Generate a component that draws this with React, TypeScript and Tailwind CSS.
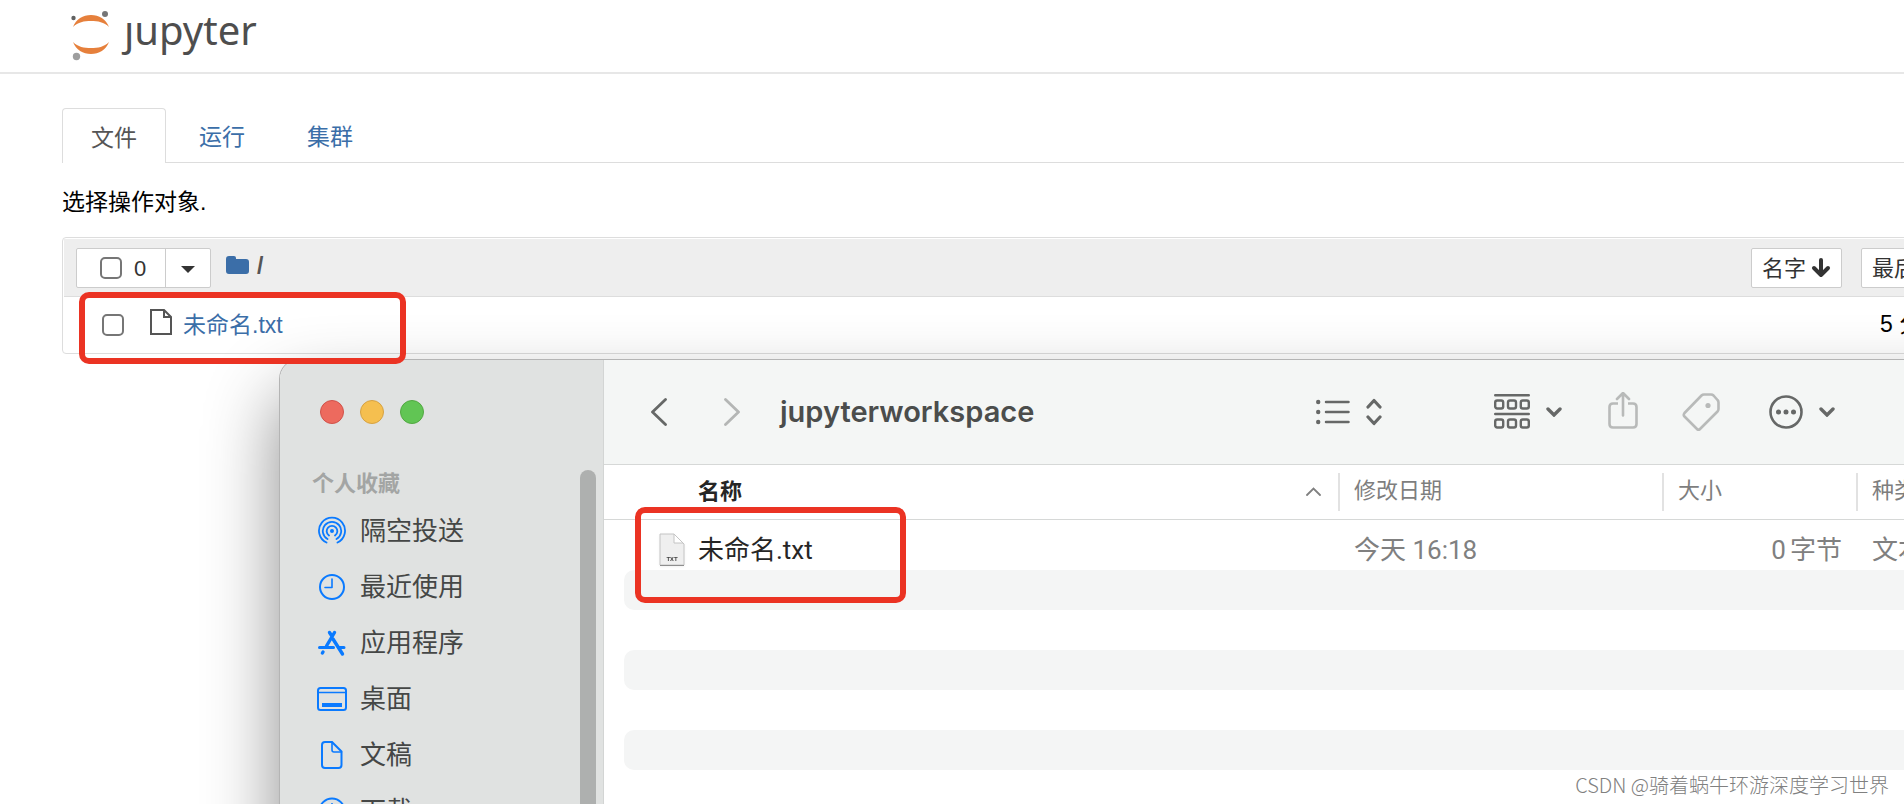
import type { ReactNode } from "react"

const tabs = ["文件", "运行", "集群"]

function JupyterLogo() {
  return (
    <a href="#home" aria-label="jupyter" className="flex items-start text-[#4e4e4e]">
      <svg width="40" height="52" viewBox="0 0 40 52" aria-hidden="true">
        <path d="M3 17C6 9 13 5 21 5s15 4 18 12C34 12 28 11 21 11S8 12 3 17Z" fill="#e6803c" />
        <path d="M3 32c3 8 10 12 18 12s15-4 18-12c-5 5-11 6-18 6S8 37 3 32Z" fill="#e6803c" />
        <circle cx="35" cy="4" r="3" fill="#767677" />
        <circle cx="3.500" cy="8" r="2.200" fill="#616262" />
        <circle cx="6.500" cy="46.500" r="3.700" fill="#9e9e9e" />
      </svg>
      <span className="ml-[14px] font-['Noto_Sans',sans-serif] text-[40px] leading-10">ȷupyter</span>
    </a>
  )
}

function Header() {
  return (
    <header className="flex h-[74px] items-start border-b-2 border-[#e7e7e7] pl-[70px] pt-[10px]">
      <JupyterLogo />
    </header>
  )
}

function FileBrowser() {
  return (
    <main className="-mr-24 pl-[62px] pt-[34px] text-[23px] text-black">
      <nav className="flex gap-1 border-b border-[#ddd]">
        {tabs.map((tab, i) => (
          <a
            key={tab}
            href={`#${i}`}
            className={
              i === 0
                ? "-mb-px flex h-[55px] items-center rounded-t border border-b-0 border-[#ddd] bg-white px-7 pt-1 text-[#555]"
                : "-mb-px flex h-[55px] items-center border border-transparent px-7 pt-1 text-[#3b6ea8]"
            }
          >
            {tab}
          </a>
        ))}
      </nav>

      <p className="mt-[23px] leading-8">选择操作对象.</p>

      <div className="mt-[19px] rounded-sm border border-[#ddd] p-px">
        <div className="flex h-[58px] items-center border-b border-[#ddd] bg-[#eee] pl-3 pt-px text-[22px] text-[#333]">
          <div className="flex h-10 rounded-xs border border-[#ccc] bg-white">
            <label className="flex w-[88px] items-center gap-3 pl-[23px]">
              <input
                type="checkbox"
                className="size-[22px] appearance-none rounded-[5px] border-2 border-[#767676] bg-white"
              />
              0
            </label>
            <button aria-label="选择" className="flex w-[45px] items-center justify-center border-l border-[#ccc]">
              <svg width="14" height="8" viewBox="0 0 14 8" className="mt-1">
                <path d="M0 0h14L7 7Z" fill="#333" />
              </svg>
            </button>
          </div>
          <a href="#root" aria-label="根目录" className="ml-[15px] pb-[6px]">
            <svg width="23" height="20" viewBox="0 0 23 20">
              <path
                d="M3 1h5q2 0 2 2v1h10q3 0 3 3v9q0 3-3 3H3q-3 0-3-3V4q0-3 3-3Z"
                fill="#3b6ea8"
              />
            </svg>
          </a>
          <span className="ml-2 pb-1 text-[23px] font-bold text-[#555]">/</span>
          <div className="ml-auto flex w-[247px] gap-[19px]">
            <button className="flex h-10 shrink-0 items-center gap-[5px] rounded-xs border border-[#ccc] bg-white px-[10px]">
              名字
              <svg width="20" height="20" viewBox="0 0 20 20" fill="none" stroke="#333" strokeWidth="4" strokeLinecap="round" strokeLinejoin="round">
                <path d="M10 2v15M3 10l7 7 7-7" />
              </svg>
            </button>
            <button className="h-10 shrink-0 rounded-xs border border-[#ccc] bg-white px-[10px]">最后修改</button>
          </div>
        </div>
        <div className="flex h-[55px] items-center pl-[38px]">
          <input
            type="checkbox"
            aria-label="未命名.txt"
            className="size-[22px] appearance-none rounded-[5px] border-2 border-[#767676] bg-white"
          />
          <svg width="22" height="26" viewBox="0 0 22 26" fill="none" stroke="#555" strokeWidth="2" className="mb-[6px] ml-[26px]">
            <path d="M1 1h13l7 7v17H1ZM14 1v7h7" />
          </svg>
          <a href="#file" className="ml-[11px] pt-px text-[#3b6ea8]">
            未命名.txt
          </a>
          <span className="ml-auto w-[118px]">5 分钟前</span>
        </div>
      </div>
    </main>
  )
}

function SideIcon({ children }: { children: ReactNode }) {
  return (
    <svg
      width="30"
      height="30"
      viewBox="0 0 30 30"
      fill="none"
      stroke="#0a7aff"
      strokeWidth="2"
      strokeLinecap="round"
      strokeLinejoin="round"
      className="shrink-0"
    >
      {children}
    </svg>
  )
}

const places = [
  {
    name: "隔空投送",
    icon: (
      <>
        <circle cx="15" cy="15" r="2" fill="#0a7aff" stroke="none" />
        <path d="M12 19.500a5.300 5.300 0 1 1 6 0M10.500 23a9.200 9.200 0 1 1 9 0M9.500 26.500a13 13 0 1 1 11 0" strokeWidth="1.800" />
      </>
    ),
  },
  {
    name: "最近使用",
    icon: (
      <>
        <circle cx="15" cy="15" r="12" />
        <path d="M15 7v8.500H8" strokeWidth="1.600" />
      </>
    ),
  },
  {
    name: "应用程序",
    icon: (
      <>
        <path d="M17.500 4.500L9.500 18M12.500 4.500l2 3M16 11l9.500 15M6 24l-.6 1" strokeWidth="3.400" />
        <path d="M2.500 19.500h14M22 19.500h5" strokeWidth="3" />
      </>
    ),
  },
  {
    name: "桌面",
    icon: (
      <>
        <rect x="1" y="4" width="28" height="22" rx="2.500" />
        <path d="M1 8.500h28" strokeWidth="1.600" />
        <path d="M5 19h20v4H5Z" fill="#0a7aff" stroke="none" />
      </>
    ),
  },
  {
    name: "文稿",
    icon: (
      <>
        <path d="M8 2h7l9.500 9.500V25q0 3-3 3H8q-3 0-3-3V5q0-3 3-3Z" />
        <path d="M15 2v8q0 2 2 2h7.500" strokeWidth="1.600" />
      </>
    ),
  },
  {
    name: "下载",
    icon: (
      <>
        <circle cx="15" cy="15" r="12.500" />
        <path d="M15 8v13M10 16l5 5 5-5" />
      </>
    ),
  },
]

function Sidebar() {
  return (
    <aside className="flex w-[324px] shrink-0 border-r border-[#d3d5d4] bg-[#e0e2e1]">
      <div className="flex-1 pt-10">
        <div className="flex gap-4 pl-10">
          <button aria-label="关闭" className="size-6 rounded-full border border-[#d0524a] bg-[#ed6a5e]" />
          <button aria-label="最小化" className="size-6 rounded-full border border-[#d6a243] bg-[#f5bf4f]" />
          <button aria-label="缩放" className="size-6 rounded-full border border-[#52a842] bg-[#61c554]" />
        </div>
        <h2 className="mt-11 pl-8 text-[22px] font-bold leading-8 text-[#a3a5a4]">个人收藏</h2>
        <ul className="mt-[3px]">
          {places.map((place) => (
            <li key={place.name}>
              <a href="#place" className="flex h-14 items-center gap-[13px] pl-[37px] text-[26px] text-[#454746]">
                <SideIcon>{place.icon}</SideIcon>
                {place.name}
              </a>
            </li>
          ))}
        </ul>
      </div>
      <div className="mr-[7px] mt-[110px] w-4 rounded-t-full bg-[#aeb0af]" />
    </aside>
  )
}

function DownChevron() {
  return (
    <svg width="16" height="10" viewBox="0 0 16 10" fill="none" stroke="#666867" strokeWidth="3.400" strokeLinecap="round" className="ml-4">
      <path d="M2 2l6 6 6-6" />
    </svg>
  )
}

function Toolbar() {
  return (
    <div className="flex h-[105px] items-center border-b border-[#d6d8d7] bg-[#f4f6f5] pl-[47px] pr-[165px]">
      <button aria-label="后退">
        <svg width="16" height="28" viewBox="0 0 16 28" fill="none" stroke="#666867" strokeWidth="2.800" strokeLinecap="round" strokeLinejoin="round">
          <path d="M14.500 1.500L1.500 14l13 12.500" />
        </svg>
      </button>
      <button aria-label="前进" className="ml-[57px]">
        <svg width="16" height="28" viewBox="0 0 16 28" fill="none" stroke="#b4b6b5" strokeWidth="2.800" strokeLinecap="round" strokeLinejoin="round">
          <path d="M1.500 1.500L14.500 14l-13 12.500" />
        </svg>
      </button>
      <h1 className="ml-10 font-[Inter,sans-serif] text-[29px] font-semibold leading-10 text-[#4b4d4c]">
        jupyterworkspace
      </h1>

      <button aria-label="列表显示" className="ml-auto flex items-center gap-4">
        <svg width="34" height="26" viewBox="0 0 34 26" fill="none" stroke="#666867" strokeWidth="2.500" strokeLinecap="round">
          <path d="M10 3h22.500M10 13h22.500M10 23h22.500" />
          <path d="M2.200 3h.01M2.200 13h.01M2.200 23h.01" strokeWidth="4.400" />
        </svg>
        <svg width="16" height="28" viewBox="0 0 16 28" fill="none" stroke="#666867" strokeWidth="3.200" strokeLinecap="round" strokeLinejoin="round">
          <path d="M2 9l6-6.500L14 9M2 19l6 6.500 6-6.500" />
        </svg>
      </button>
      <button aria-label="分组" className="ml-28 flex items-center">
        <svg width="36" height="36" viewBox="0 0 36 36" fill="none" stroke="#666867" strokeWidth="2.400" strokeLinecap="round">
          <path d="M1.200 1.200h33.600M1.200 20h33.600" />
          <rect x="1.200" y="6.500" width="8" height="8" rx="2" />
          <rect x="14" y="6.500" width="8" height="8" rx="2" />
          <rect x="26.800" y="6.500" width="8" height="8" rx="2" />
          <rect x="1.200" y="25.500" width="8" height="8" rx="2" />
          <rect x="14" y="25.500" width="8" height="8" rx="2" />
          <rect x="26.800" y="25.500" width="8" height="8" rx="2" />
        </svg>
        <DownChevron />
      </button>
      <button aria-label="共享" className="ml-[46px]">
        <svg width="30" height="40" viewBox="0 0 30 40" fill="none" stroke="#b8bab9" strokeWidth="2.600" strokeLinecap="round" strokeLinejoin="round">
          <path d="M10 11.500H5q-3.500 0-3.500 3.500v17q0 3.500 3.500 3.500h20q3.500 0 3.500-3.500V15q0-3.500-3.500-3.500h-5" strokeLinecap="butt" />
          <path d="M15 23.500V1.500M9 7l6-6 6 6" />
        </svg>
      </button>
      <button aria-label="标签" className="ml-11">
        <svg width="38" height="38" viewBox="0 0 38 38" fill="none" stroke="#b8bab9" strokeWidth="2.600" strokeLinejoin="round">
          <path d="M19.500 2.500Q20.500 1.500 22 1.500H29Q30.500 1.500 31.500 2.500L35.500 7Q36.500 8 36.500 9.500V16Q36.500 17.500 35.500 18.500L18 36Q16.500 37.500 15 36L2.500 23.500Q1 22 2.500 20Z" />
          <circle cx="26" cy="12.500" r="2.600" fill="#b8bab9" stroke="none" />
        </svg>
      </button>
      <button aria-label="更多" className="ml-[49px] flex items-center">
        <svg width="34" height="34" viewBox="0 0 34 34" fill="none" stroke="#666867" strokeWidth="2.600">
          <circle cx="17" cy="17" r="15.500" />
          <path d="M9.500 17h.01M17 17h.01M24.500 17h.01" strokeWidth="5" strokeLinecap="round" />
        </svg>
        <DownChevron />
      </button>
    </div>
  )
}

function TxtIcon() {
  return (
    <svg width="26" height="34" viewBox="0 0 26 34" className="shrink-0 drop-shadow-xs">
      <path d="M1 1h14l10 10v21H1Z" fill="#efefef" stroke="#c4c4c4" />
      <path d="M1 32.500h24" stroke="#8e8e8e" />
      <path d="M15 1v9h9Z" fill="#fff" stroke="#c4c4c4" />
      <text x="13" y="28" fontSize="6" fontWeight="bold" textAnchor="middle" fill="#444">
        TXT
      </text>
    </svg>
  )
}

function FileTable() {
  return (
    <>
      <table className="w-full table-fixed text-left">
        <colgroup>
          <col />
          <col className="w-[324px]" />
          <col className="w-[194px]" />
          <col className="w-36" />
        </colgroup>
        <thead className="border-b border-[#d6d8d7] text-[22px] text-[#7e7e7e]">
          <tr className="h-[54px]">
            <th className="pl-[94px] pr-[17px] font-bold text-[#262626]">
              <div className="flex items-center justify-between">
                名称
                <svg width="15" height="9" viewBox="0 0 15 9" fill="none" stroke="#808080" strokeWidth="1.800" strokeLinecap="round">
                  <path d="M1 8l6.500-6.500L14 8" />
                </svg>
              </div>
            </th>
            {["修改日期", "大小", "种类"].map((label) => (
              <th key={label} className="font-normal">
                <div className="h-[38px] border-l-2 border-[#e2e2e2] pl-[14px] leading-9">{label}</div>
              </th>
            ))}
          </tr>
        </thead>
        <tbody className="text-[26px] leading-10 text-[#808080]">
          <tr>
            <td className="pl-[55px] pt-[10px] text-[#262626]">
              <div className="flex items-center gap-[13px]">
                <TxtIcon />
                未命名.txt
              </div>
            </td>
            <td className="pl-4 pt-[10px]">今天 16:18</td>
            <td className="pr-[14px] pt-[10px] text-right">
              <span className="mr-1">0</span>字节
            </td>
            <td className="pl-4 pt-[10px]">文本文稿</td>
          </tr>
        </tbody>
      </table>
      <div className="flex flex-col gap-10 pl-5">
        <div className="h-10 rounded-l-[10px] bg-[#f4f5f5]" />
        <div className="h-10 rounded-l-[10px] bg-[#f4f5f5]" />
        <div className="h-10 rounded-l-[10px] bg-[#f4f5f5]" />
      </div>
    </>
  )
}

function FinderWindow() {
  return (
    <section className="absolute -bottom-40 -right-24 left-[279px] top-[359px] flex overflow-hidden rounded-tl-[20px] border-l border-t border-[#b4b4b4] bg-white font-[Roboto,'Noto_Sans_CJK_SC',sans-serif] shadow-[0_36px_72px_rgba(0,0,0,0.45)]">
      <Sidebar />
      <div className="min-w-0 flex-1">
        <Toolbar />
        <FileTable />
      </div>
    </section>
  )
}

export default function App() {
  return (
    <div className="relative min-h-screen overflow-hidden bg-white font-['Liberation_Sans','Noto_Sans_CJK_SC',sans-serif]">
      <Header />
      <FileBrowser />
      <FinderWindow />

      {/* Highlights around the same file in both views */}
      <div className="absolute left-[79px] top-[292px] h-[72px] w-[327px] rounded-[10px] border-6 border-[#eb3323]" />
      <div className="absolute left-[635px] top-[507px] h-24 w-[271px] rounded-[10px] border-6 border-[#eb3323]" />

      <p className="absolute bottom-1 right-[15px] font-['Noto_Sans_CJK_SC',sans-serif] text-[20px] font-light leading-[30px] text-[#808080] [text-shadow:-1px_-1px_0_#fff]">
        CSDN @骑着蜗牛环游深度学习世界
      </p>
    </div>
  )
}
